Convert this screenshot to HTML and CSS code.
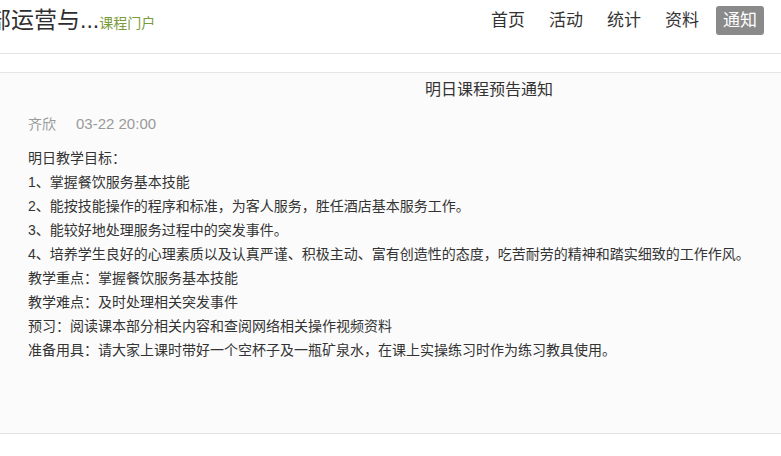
FILE: index.html
```html
<!DOCTYPE html>
<html lang="zh">
<head>
<meta charset="utf-8">
<title>明日课程预告通知</title>
<link rel="stylesheet" href="styles.css">
</head>
<body>
<header class="topbar">
  <div class="brand">
    <span class="brand-name">餐饮部运营与...</span><span class="brand-sub">课程门户</span>
  </div>
  <nav class="nav">
    <a class="nav-item">首页</a>
    <a class="nav-item">活动</a>
    <a class="nav-item">统计</a>
    <a class="nav-item">资料</a>
    <a class="nav-item active">通知</a>
  </nav>
</header>
<main class="notice">
  <h1 class="notice-title">明日课程预告通知</h1>
  <div class="meta"><span class="author">齐欣</span><span class="date">03-22 20:00</span></div>
  <div class="body">
    <p>明日教学目标：</p>
    <p>1、掌握餐饮服务基本技能</p>
    <p>2、能按技能操作的程序和标准，为客人服务，胜任酒店基本服务工作。</p>
    <p>3、能较好地处理服务过程中的突发事件。</p>
    <p>4、培养学生良好的心理素质以及认真严谨、积极主动、富有创造性的态度，吃苦耐劳的精神和踏实细致的工作作风。</p>
    <p>教学重点：掌握餐饮服务基本技能</p>
    <p>教学难点：及时处理相关突发事件</p>
    <p>预习：阅读课本部分相关内容和查阅网络相关操作视频资料</p>
    <p>准备用具：请大家上课时带好一个空杯子及一瓶矿泉水，在课上实操练习时作为练习教具使用。</p>
  </div>
</main>
</body>
</html>
```

FILE: styles.css
```css
html, body {
  margin: 0;
  padding: 0;
  background: #ffffff;
}
body {
  font-family: "Liberation Sans", "Noto Sans CJK SC", sans-serif;
  color: #333333;
  overflow: hidden;
}
.topbar {
  height: 54px;
  box-sizing: border-box;
  border-bottom: 1px solid #e4e4e4;
  display: flex;
  align-items: flex-start;
  justify-content: space-between;
  padding: 6px 17px 0 0;
  overflow: hidden;
}
.brand {
  display: flex;
  align-items: baseline;
  margin-left: -58px;
  margin-top: -1px;
  white-space: nowrap;
  line-height: 30px;
}
.brand-name {
  font-size: 23px;
  color: #2e2e2e;
}
.brand-sub {
  font-size: 14px;
  color: #7b9a3c;
}
.nav {
  display: flex;
  gap: 10px;
  align-items: center;
}
.nav-item {
  font-size: 17px;
  line-height: 21px;
  padding: 4px 7px;
  border-radius: 3px;
  color: #333333;
}
.nav-item.active {
  background: #8a8a8a;
  color: #ffffff;
}
.notice {
  margin-top: 18px;
  border-top: 1px solid #e4e4e4;
  border-bottom: 1px solid #e0e0e0;
  background: #fbfbfb;
  height: 362px;
  padding: 5px 0 0 28px;
  box-sizing: border-box;
}
.notice-title {
  margin: 0;
  font-size: 16px;
  font-weight: normal;
  line-height: 24px;
  padding-left: 397px;
  color: #333333;
}
.meta {
  margin-top: 10px;
  line-height: 24px;
  font-size: 14px;
  color: #9a9a9a;
  display: flex;
  gap: 20px;
}
.meta .date {
  font-size: 15px;
}
.body {
  margin-top: 10px;
  font-size: 14px;
}
.body p {
  margin: 0;
  line-height: 24px;
}
```
